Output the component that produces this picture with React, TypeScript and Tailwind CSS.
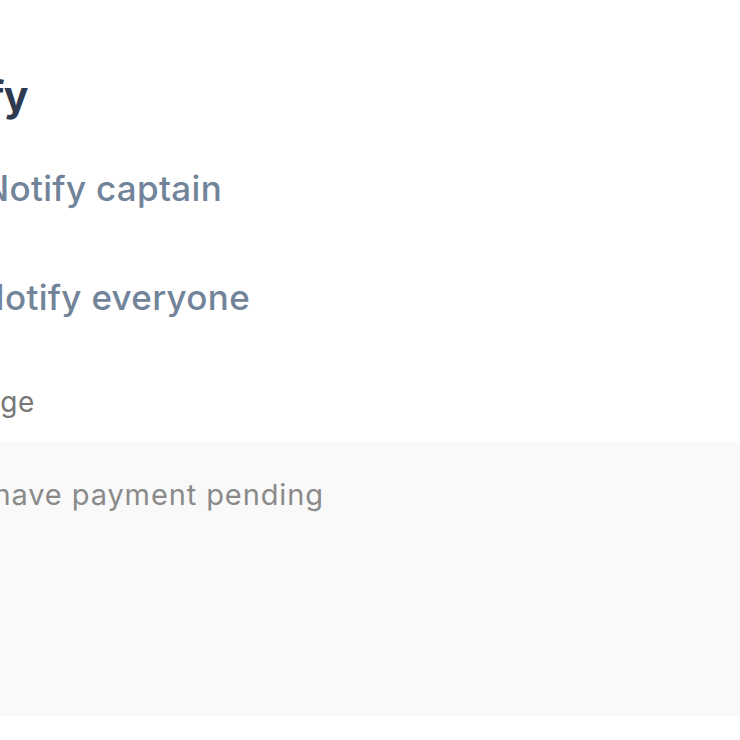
import { ReactNode } from 'react';

// the screenshot is a zoomed crop, texts are right-anchored so the cut falls where it should
const Clip = ({ children, right, className }: { children: ReactNode; right: string; className?: string }) => {
  return (
    <div className={`flex justify-end whitespace-nowrap ${right} ${className ?? ''}`}>{children}</div>
  );
};

export default function App() {
  return (
    <div className="w-[740px] h-[740px] bg-white overflow-hidden font-['Inter',sans-serif]">
      <div className="flex flex-col pt-[68px]">
        <Clip right="w-[500px] -ml-[472px]">
          <h2 className="text-[41px] font-bold text-[#2d3a50] leading-[56px] tracking-[-0.5px]">Notify</h2>
        </Clip>
        <div className="flex flex-col pt-[37px] gap-[55px]">
          <Clip right="w-[500px] -ml-[278px] h-[54px] items-center">
            <span className="h-[34px] w-[34px] rounded-full border-2 border-[#c5ccd6] mr-[20px]"></span>
            <span className="text-[35px] font-medium text-[#72849a] tracking-[0.3px]">Notify captain</span>
          </Clip>
          <Clip right="w-[500px] -ml-[250px] h-[54px] items-center">
            <span className="h-[34px] w-[34px] rounded-full border-2 border-[#c5ccd6] mr-[20px]"></span>
            <span className="text-[35px] font-medium text-[#72849a] tracking-[0.3px]">Notify everyone</span>
          </Clip>
        </div>
        <div className="flex flex-col pt-[58px]">
          <Clip right="w-[500px] -ml-[465px]">
            <label className="text-[28px] text-[#777777] leading-[40px] tracking-[0.6px]">Message</label>
          </Clip>
          <div className="mt-[20px] h-[274px] bg-[#f9f9f9] pt-[33px]">
            <Clip right="w-[700px] -ml-[376px]">
              <p className="text-[29px] text-[#8a8a8a] leading-[40px] tracking-[0.9px]">Players who have payment pending</p>
            </Clip>
          </div>
        </div>
      </div>
    </div>
  );
}
